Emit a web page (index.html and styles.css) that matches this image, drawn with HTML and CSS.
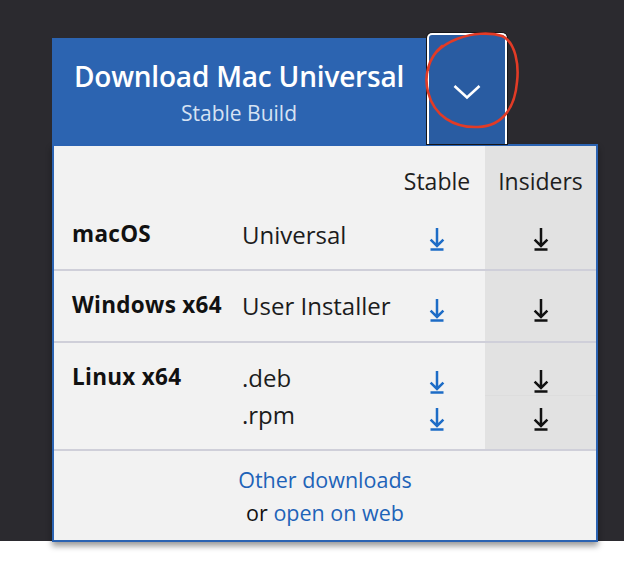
FILE: index.html
```html
<!DOCTYPE html>
<html>
<head>
<meta charset="utf-8">
<link rel="stylesheet" href="styles.css">
</head>
<body>
<div class="stage">
  <div class="widget">
    <div class="head">
      <div class="main-btn">
        <div class="title">Download Mac Universal</div>
        <div class="subtitle">Stable Build</div>
      </div>
      <div class="chev-btn">
        <svg width="28" height="16" viewBox="0 0 28 16"><polyline points="1.5,2 14,13.5 26.5,2" fill="none" stroke="#fff" stroke-width="2.6"/></svg>
      </div>
    </div>
    <div class="panel">
      <table class="dl">
        <colgroup><col class="c1"><col class="c2"><col class="c3"><col class="c4"></colgroup>
        <tr class="hrow">
          <td></td><td></td><td class="hd">Stable</td><td class="hd ins">Insiders</td>
        </tr>
        <tr class="row">
          <td class="os">macOS</td>
          <td class="type"><div class="ln">Universal</div></td>
          <td class="ic"><div class="ln icl"><svg class="arrow blue" width="16" height="24" viewBox="0 0 16 24"><path d="M8 1V19M1.6 12.6L8 19L14.4 12.6M1.5 22.6H14.5"/></svg></div></td>
          <td class="ic ins"><div class="ln icl"><svg class="arrow dark" width="16" height="24" viewBox="0 0 16 24"><path d="M8 1V19M1.6 12.6L8 19L14.4 12.6M1.5 22.6H14.5"/></svg></div></td>
        </tr>
        <tr class="row tall">
          <td class="os">Windows x64</td>
          <td class="type"><div class="ln">User Installer</div></td>
          <td class="ic"><div class="ln icl"><svg class="arrow blue" width="16" height="24" viewBox="0 0 16 24"><path d="M8 1V19M1.6 12.6L8 19L14.4 12.6M1.5 22.6H14.5"/></svg></div></td>
          <td class="ic ins"><div class="ln icl"><svg class="arrow dark" width="16" height="24" viewBox="0 0 16 24"><path d="M8 1V19M1.6 12.6L8 19L14.4 12.6M1.5 22.6H14.5"/></svg></div></td>
        </tr>
        <tr class="row">
          <td class="os">Linux x64</td>
          <td class="type"><div class="ln">.deb</div><div class="ln">.rpm</div></td>
          <td class="ic">
            <div class="ln icl"><svg class="arrow blue" width="16" height="24" viewBox="0 0 16 24"><path d="M8 1V19M1.6 12.6L8 19L14.4 12.6M1.5 22.6H14.5"/></svg></div>
            <div class="ln icl"><svg class="arrow blue" width="16" height="24" viewBox="0 0 16 24"><path d="M8 1V19M1.6 12.6L8 19L14.4 12.6M1.5 22.6H14.5"/></svg></div>
          </td>
          <td class="ic ins">
            <div class="ln icl sub"><svg class="arrow dark" width="16" height="24" viewBox="0 0 16 24"><path d="M8 1V19M1.6 12.6L8 19L14.4 12.6M1.5 22.6H14.5"/></svg></div>
            <div class="ln icl"><svg class="arrow dark" width="16" height="24" viewBox="0 0 16 24"><path d="M8 1V19M1.6 12.6L8 19L14.4 12.6M1.5 22.6H14.5"/></svg></div>
          </td>
        </tr>
      </table>
      <div class="foot">
        <div><a class="link">Other downloads</a></div>
        <div>or <a class="link">open on web</a></div>
      </div>
    </div>
  </div>
  <svg class="annot" width="110" height="110" viewBox="0 0 110 110">
    <path d="M10 44 C14 14, 60 2, 84 10 C98 16, 101 40, 99 56 C97 80, 86 100, 60 101 C36 102, 16 90, 10 66 C6 50, 10 32, 24 20" fill="none" stroke="#e23b26" stroke-width="2.6" stroke-linecap="round"/>
  </svg>
</div>
</body>
</html>
```

FILE: styles.css
```css
html { background: #ffffff; }
html, body { margin: 0; padding: 0; }
body {
  font-family: "Open Sans", "Noto Sans", sans-serif;
  min-height: 570px;
  background: linear-gradient(to bottom, #2b2a2f 0, #2b2a2f 541px, #ffffff 541px, #ffffff 100%);
}
.stage {
  position: relative;
  padding: 33px 0 20px 52px;
}
.widget { width: 546px; }
.head { display: flex; align-items: flex-end; }
.main-btn {
  width: 374px;
  height: 106px;
  box-sizing: border-box;
  background: #2c64b1;
  color: #fff;
  text-align: center;
  padding-top: 20px;
}
.title { font-size: 28px; font-weight: 600; line-height: 36px; letter-spacing: -0.2px; }
.subtitle { font-size: 21px; line-height: 30px; margin-top: 4px; color: #d6e2f3; }
.chev-btn {
  margin-left: 1px;
  width: 80px;
  height: 111px;
  box-sizing: border-box;
  background: #295ca2;
  border: 2px solid #ffffff;
  border-bottom: none;
  border-radius: 5px 5px 0 0;
  box-shadow: 0 0 0 1px #151518;
  display: flex;
  justify-content: center;
  padding-top: 49px;
}
.chev-btn svg { display: block; }
.panel {
  width: 546px;
  box-sizing: border-box;
  border: 2px solid #2b63b2;
  background: #f2f2f2;
  box-shadow: 0 4px 6px rgba(0,0,0,0.4);
}
.dl { border-collapse: collapse; width: 542px; table-layout: fixed; }
.c1 { width: 188px; }
.c2 { width: 147px; }
.c3 { width: 96px; }
.c4 { width: 111px; }
.dl td { padding: 0; vertical-align: top; white-space: nowrap; }
.ins { background: #e2e2e2; }
.hrow td { height: 54px; vertical-align: bottom; }
.hd { text-align: center; font-size: 23px; line-height: 37px; color: #1e1e1e; }
.row td { padding: 16px 0; border-bottom: 2px solid #cfcfd9; }
.row.tall td { padding-bottom: 17px; }
.os { padding-left: 18px !important; font-weight: 700; font-size: 22.5px; line-height: 36px; color: #111; letter-spacing: 0.3px; }
.type { font-size: 24px; color: #1c1c1c; }
.ln { height: 37px; line-height: 37px; }
.icl { display: flex; justify-content: center; align-items: flex-end; padding-bottom: 2px; box-sizing: border-box; }
.sub { border-bottom: 1px solid #dddddd; }
.arrow { display: block; fill: none; stroke-width: 2.5; }
.arrow.blue { stroke: #1d6cc6; }
.arrow.dark { stroke: #111111; }
.foot { text-align: center; font-size: 21.5px; line-height: 33px; padding: 12px 0 11px; color: #111; }
.link { color: #1e63b8; text-decoration: none; }
.annot { position: absolute; left: 418px; top: 26px; }
```
